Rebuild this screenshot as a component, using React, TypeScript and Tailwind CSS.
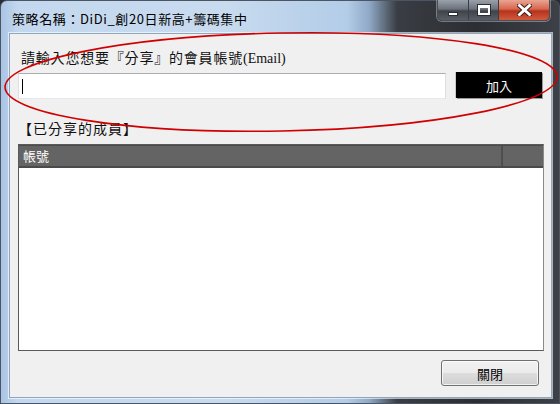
import React from 'react';

const cjk = { fontFamily: '"Noto Sans CJK TC", "Noto Sans", sans-serif' };

const CaptionButtons: React.FC = () => (
  <div className="flex h-[21px] -mt-px mr-[9px] rounded-b-[5px] border border-t-0 border-[#4a4f57] shadow-[0_0_0_1px_rgba(255,255,255,0.35)] overflow-hidden">
    {/* minimize */}
    <div className="w-[31px] h-full flex items-end justify-center pb-[4px] bg-[linear-gradient(180deg,#9aa1ab_0%,#6c727b_45%,#3f434a_55%,#5a5f67_100%)] border-r border-[#3a3d42]">
      <div className="w-[10px] h-[4px] bg-white border border-[#2a2d33]" />
    </div>
    {/* maximize */}
    <div className="w-[30px] h-full flex items-center justify-center bg-[linear-gradient(180deg,#9aa1ab_0%,#6c727b_45%,#3f434a_55%,#5a5f67_100%)] border-r border-[#3a3d42]">
      <div className="w-[12px] h-[10px] border-[2px] border-t-[3px] border-white outline outline-1 outline-[#2a2d33]" />
    </div>
    {/* close */}
    <div className="w-[50px] h-full flex items-center justify-center bg-[linear-gradient(180deg,#e9a592_0%,#d7664e_45%,#b8321c_55%,#cf5a3e_100%)]">
      <svg width="15" height="12" viewBox="0 0 15 12">
        <path d="M2.5 1.5 L12.5 10.5 M12.5 1.5 L2.5 10.5" stroke="#3a1a12" strokeWidth="4.8" strokeLinecap="square" />
        <path d="M2.5 1.5 L12.5 10.5 M12.5 1.5 L2.5 10.5" stroke="#ffffff" strokeWidth="3" strokeLinecap="square" />
      </svg>
    </div>
  </div>
);

export default function App() {
  return (
    <div className="w-[560px] h-[404px] relative overflow-hidden bg-[#2b2d31]" style={cjk}>
      {/* WINDOW FRAME */}
      <div className="h-full flex flex-col rounded-t-[7px] border border-[#4b5563] bg-[linear-gradient(90deg,#a9c4e4_0%,#c3d7ee_3%,#c8dbef_40%,#b3cce8_62%,#8fa9c6_66%,#3a3d43_71%,#2c2e33_85%,#3d4046_100%)]">
        {/* TITLE BAR */}
        <div className="h-[32px] flex items-start shrink-0">
          <div className="pl-[11px] pt-[9px] text-[13px] leading-[18px] tracking-[0.6px] text-black whitespace-nowrap">
            策略名稱：DiDi_創20日新高+籌碼集中
          </div>
          <div className="ml-auto">
            <CaptionButtons />
          </div>
        </div>

        {/* CLIENT AREA */}
        <div className="flex-1 ml-[8px] mr-[7px] mb-[5px] border border-[#8fa6c0] shadow-[0_0_0_1px_rgba(255,255,255,0.6)] bg-[#f0f0f0] flex flex-col pl-[8px] pr-[7px] pt-[13px]">
          <div className="h-[20px] pl-[3px] text-[14px] leading-[20px] tracking-[0.8px] text-[#111] whitespace-nowrap">
            請輸入您想要『分享』的會員帳號
            <span className="tracking-normal" style={{ fontFamily: '"Liberation Serif", serif' }}>(Email)</span>
          </div>

          <div className="flex items-start mt-[6px]">
            <div className="w-[428px] h-[26px] bg-white border border-[#dbdfe6] border-t-[#abadb3] border-b-[#e3e9ef] flex items-center pl-[3px]">
              <div className="w-px h-[15px] bg-black" />
            </div>
            <button className="ml-auto mr-[2px] -mt-px w-[86px] h-[26px] bg-black text-white text-[13px] leading-none shadow-[1px_1px_0_#9a9a9a,-1px_0_0_#c8c8c8]">
              加入
            </button>
          </div>

          <div className="mt-[19px] h-[20px] text-[14px] leading-[20px] tracking-[1px] text-[#111] whitespace-nowrap">
            【已分享的成員】
          </div>

          {/* SHARED MEMBERS TABLE */}
          <div className="mt-[6px] h-[207px] border border-[#5a5a5a] border-r-[#8a8a8a] bg-white flex flex-col">
            <div className="h-[23px] flex bg-[#646464] border-t border-[#4c4c4c] border-b-2 border-b-[#4a4a4a]">
              <div className="w-[484px] pl-[4px] text-[13px] leading-[20px] text-white border-r-2 border-[#4e4e4e]">
                帳號
              </div>
              <div className="flex-1" />
            </div>
          </div>

          <div className="flex justify-end mt-[9px] mr-[5px]">
            <button className="w-[98px] h-[26px] rounded-[3px] border border-[#707070] bg-[linear-gradient(180deg,#f2f2f2_0%,#ebebeb_48%,#dddddd_52%,#cfcfcf_100%)] shadow-[inset_0_0_0_1px_rgba(255,255,255,0.7)] text-[13px] leading-none text-black">
              關閉
            </button>
          </div>
        </div>
      </div>

      {/* RED ANNOTATION ELLIPSE */}
      <svg className="absolute inset-0 pointer-events-none" width="560" height="404" viewBox="0 0 560 404">
        <ellipse cx="281" cy="82" rx="276" ry="49" fill="none" stroke="#d10000" strokeWidth="1.6" transform="rotate(-1.1 281 82)" />
      </svg>
    </div>
  );
}
